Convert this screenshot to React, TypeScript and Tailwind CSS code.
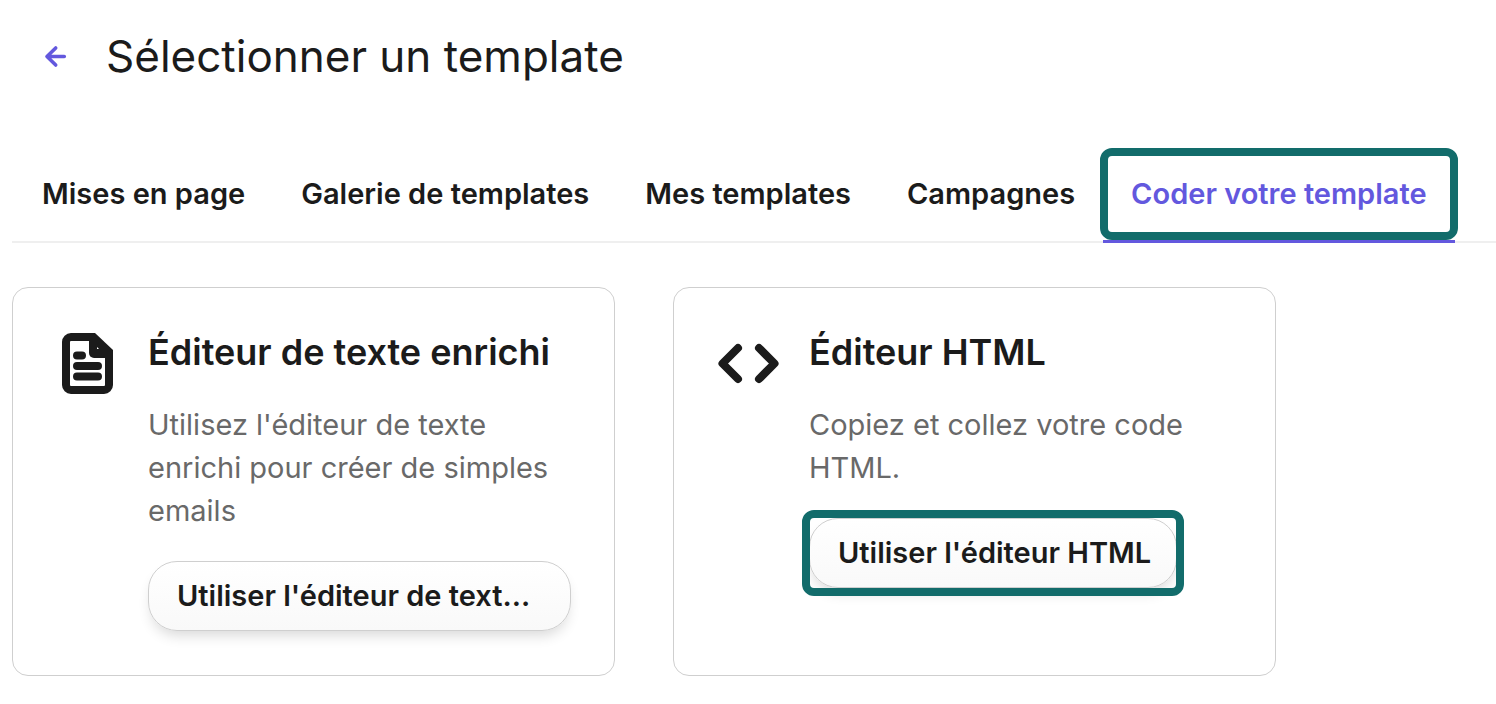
import React, { useState } from 'react';

const tabs = [
  { id: 'layouts', label: 'Mises en page' },
  { id: 'gallery', label: 'Galerie de templates' },
  { id: 'mine', label: 'Mes templates' },
  { id: 'campaigns', label: 'Campagnes' },
  { id: 'code', label: 'Coder votre template' },
];

const ArrowLeftIcon = () => (
  <svg width="24" height="24" viewBox="0 0 24 24" fill="none" aria-hidden="true">
    <path
      d="M20.3 12.5H3M11.7 4L3 12.5L11.7 21"
      stroke="currentColor"
      strokeWidth="3.6"
      strokeLinecap="round"
      strokeLinejoin="round"
    />
  </svg>
);

const DocumentIcon = () => (
  <svg width="64" height="64" viewBox="0 0 64 64" fill="none" aria-hidden="true">
    <path
      d="M38 6H15a5 5 0 0 0-5 5V54a5 5 0 0 0 5 5H48a5 5 0 0 0 5-5V21"
      stroke="currentColor"
      strokeWidth="8"
    />
    <path d="M33 2H39L57 19V27H38a5 5 0 0 1-5-5z" fill="currentColor" />
    <path d="M41 16l2 2H41z" fill="#fff" />
    <path
      d="M21 24.5h5M21 35h21M21 45.5h21"
      stroke="currentColor"
      strokeWidth="8"
      strokeLinecap="round"
    />
  </svg>
);

const CodeIcon = () => (
  <svg width="64" height="64" viewBox="0 0 64 64" fill="none" aria-hidden="true">
    <path
      d="M21 17L5.5 32.5L21 48M42 17L57.5 32.5L42 48"
      stroke="currentColor"
      strokeWidth="8"
      strokeLinecap="round"
      strokeLinejoin="round"
    />
  </svg>
);

type EditorCardProps = {
  icon: React.ReactNode;
  title: string;
  description: string;
  action: string;
  highlighted?: boolean;
};

const EditorCard = ({ icon, title, description, action, highlighted }: EditorCardProps) => (
  <article className="flex gap-7 rounded-2xl border border-[#cfcfcf] px-[43px] pt-[43px] pb-11">
    <div className="shrink-0">{icon}</div>
    <div className="flex min-w-0 flex-1 flex-col items-start">
      <h2 className="text-[36px] leading-[43px] font-semibold">{title}</h2>
      <p className="mt-[29px] text-[29px] leading-[43px] text-[#696969]">{description}</p>
      <div className={highlighted ? 'relative mt-[29px]' : 'mt-[29px] w-full'}>
        <button
          type="button"
          className="block h-[70px] w-full truncate rounded-[29px] border border-[#cfcfcf] bg-linear-to-b from-white to-[#f9f9f9] pr-[25px] pl-7 text-left text-[29px] font-semibold shadow-[0_8px_14px_-4px_rgba(0,0,0,0.16)]"
        >
          {action}
        </button>
        {highlighted && (
          <span className="pointer-events-none absolute -inset-x-[7px] -inset-y-2 rounded-xl border-8 border-[#126c6b]" />
        )}
      </div>
    </div>
  </article>
);

const App = () => {
  const [activeTab, setActiveTab] = useState('code');

  return (
    <main className="min-h-screen bg-white pl-3 font-['Inter',sans-serif] text-[#1b1b1b]">
      {/* Header */}
      <header className="flex items-center gap-[38px] pt-[30px] pl-8">
        <button type="button" aria-label="Retour" className="text-[#6358de]">
          <ArrowLeftIcon />
        </button>
        <h1 className="text-[44px] leading-[52px]">Sélectionner un template</h1>
      </header>

      {/* Tabs */}
      <nav role="tablist" className="mt-[66px] flex border-b-2 border-[#efefef] px-0.5">
        {tabs.map((tab) => {
          const active = tab.id === activeTab;
          return (
            <button
              key={tab.id}
              type="button"
              role="tab"
              aria-selected={active}
              onClick={() => setActiveTab(tab.id)}
              className={`relative -mb-0.5 border-b-3 px-7 pt-6 pb-[25px] text-[29px] leading-[43px] font-semibold whitespace-nowrap ${
                active ? 'border-[#6358de] text-[#6358de]' : 'border-transparent'
              }`}
            >
              {tab.label}
              {active && (
                <span className="pointer-events-none absolute -inset-x-[3px] inset-y-0 rounded-xl border-8 border-[#126c6b]" />
              )}
            </button>
          );
        })}
      </nav>

      {/* Editors */}
      <section className="mt-11 grid max-w-[1264px] grid-cols-2 gap-[58px]">
        <EditorCard
          icon={<DocumentIcon />}
          title="Éditeur de texte enrichi"
          description="Utilisez l'éditeur de texte enrichi pour créer de simples emails"
          action="Utiliser l'éditeur de text..."
        />
        <EditorCard
          icon={<CodeIcon />}
          title="Éditeur HTML"
          description="Copiez et collez votre code HTML."
          action="Utiliser l'éditeur HTML"
          highlighted
        />
      </section>
    </main>
  );
};

export default App;
